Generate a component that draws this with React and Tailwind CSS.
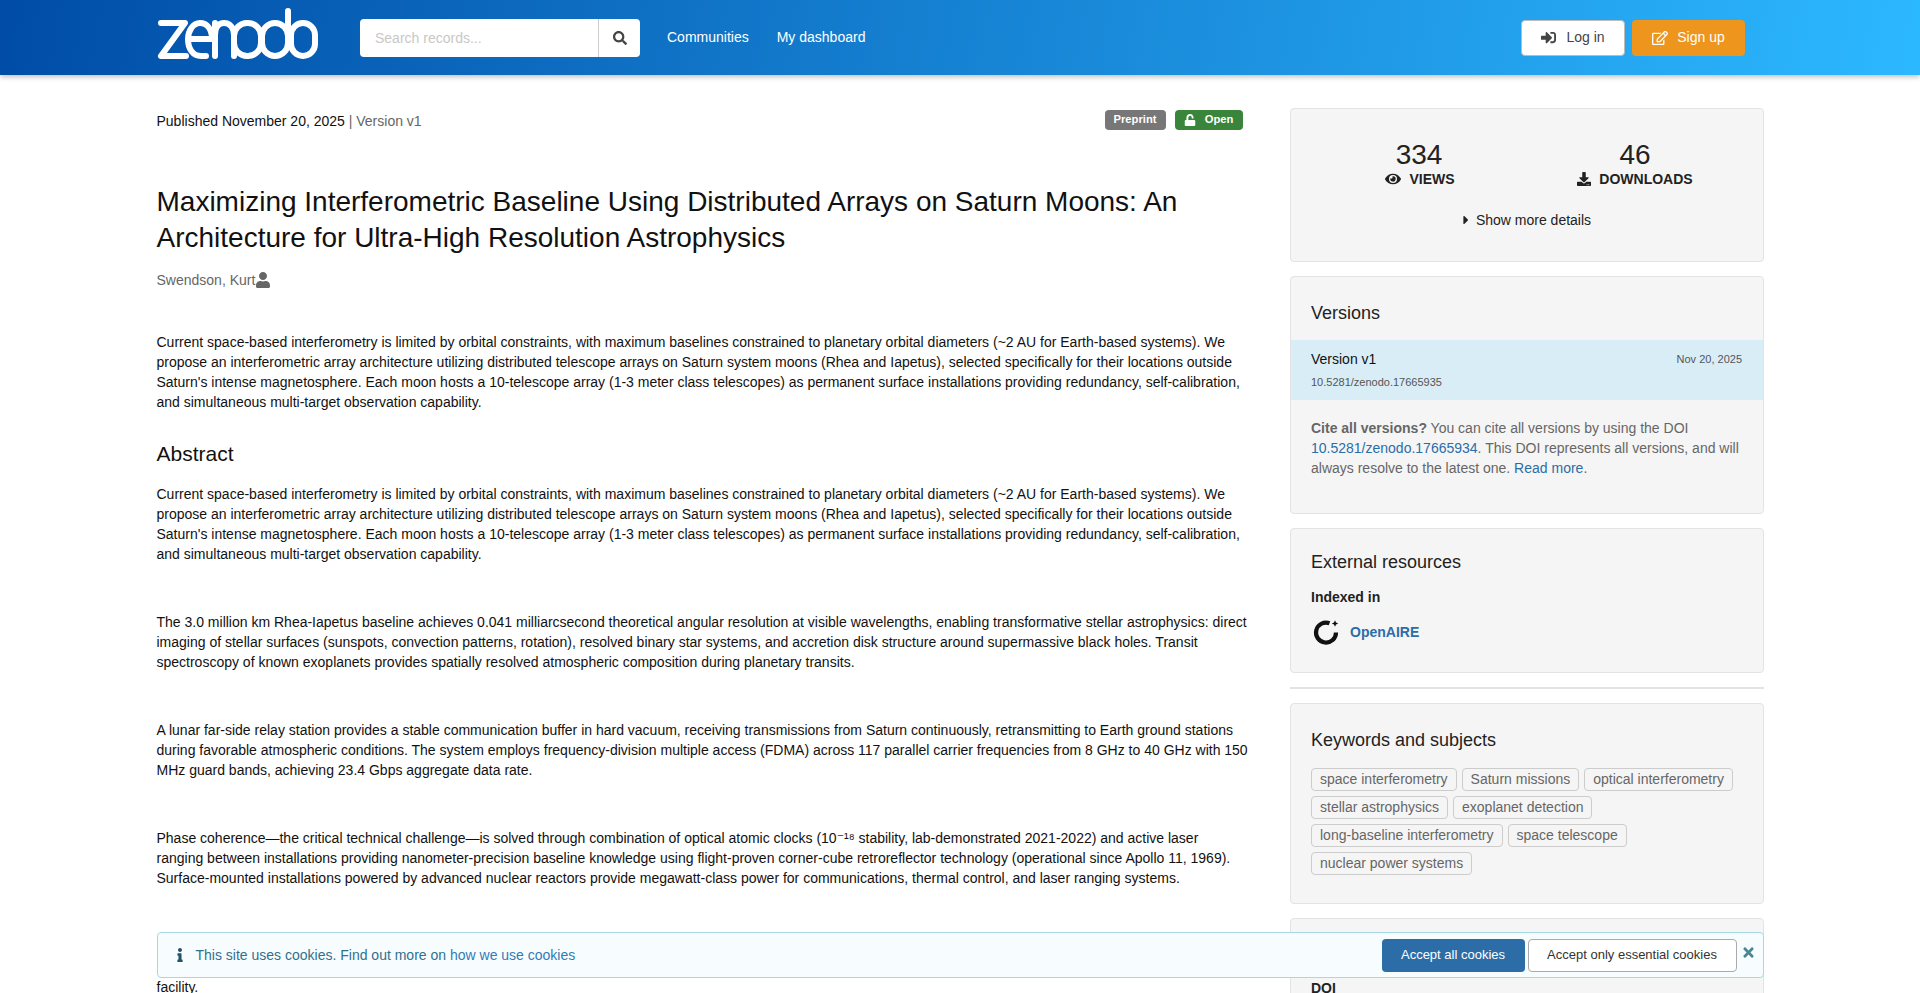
import React from 'react';
import { FaSearch, FaSignInAlt, FaRegEdit, FaEye, FaDownload, FaCaretRight, FaUser, FaUnlock, FaInfo, FaTimes } from 'react-icons/fa';

const ZenodoLogo = () => (
  <svg className="mb-[7px]" width="161" height="54" viewBox="157 7 161 54" fill="none" stroke="white" strokeWidth="6" strokeLinecap="round" strokeLinejoin="round">
    <path d="M161 23 H185 L161 56 H186" />
    <path d="M188 39 H212 C212 29 207 23 200 23 C193 23 188 31 188 39 C188 49 193 56 201 56 H206" />
    <path d="M215 56 V23 M215 35 C215 27 219 23 224 23 C230 23 234 28 234 35 V56" />
    <rect x="234" y="23" width="27" height="33" rx="13" />
    <rect x="262" y="23" width="26" height="33" rx="13" />
    <path d="M288 11 V43" />
    <rect x="291" y="23" width="24" height="33" rx="12" />
  </svg>
);

const OpenAireLogo = () => (
  <svg width="28" height="28" viewBox="0 0 28 28" fill="none">
    <path d="M18.5 5.2 A10 10 0 1 0 25 14.5" stroke="#111" strokeWidth="4.2" />
    <path d="M24 2.3 L25 4.6 L27.2 5.5 L25 6.4 L24 8.7 L23 6.4 L20.8 5.5 L23 4.6 Z" fill="#111" />
  </svg>
);

const Card = ({ className = '', children }) => (
  <div className={`bg-[#f5f5f5] border border-[#e3e3e3] rounded-[4px] ${className}`}>{children}</div>
);

const keywords = [
  'space interferometry', 'Saturn missions', 'optical interferometry', 'stellar astrophysics', 'exoplanet detection',
  'long-baseline interferometry', 'space telescope', 'nuclear power systems',
];

const abstractText = "Current space-based interferometry is limited by orbital constraints, with maximum baselines constrained to planetary orbital diameters (~2 AU for Earth-based systems). We propose an interferometric array architecture utilizing distributed telescope arrays on Saturn system moons (Rhea and Iapetus), selected specifically for their locations outside Saturn's intense magnetosphere. Each moon hosts a 10-telescope array (1-3 meter class telescopes) as permanent surface installations providing redundancy, self-calibration, and simultaneous multi-target observation capability.";

const Header = () => (
  <header className="relative z-10 h-[75px] bg-[linear-gradient(100deg,#004ca6,#2cb8ff)] shadow-[0_2px_5px_rgba(0,0,0,0.25)] flex items-center pl-[156.5px] pr-[175px]">
    <ZenodoLogo />
    <div className="flex ml-[42.5px] h-[38px] w-[280px] bg-white rounded-[4px]">
      <div className="flex-1 px-[15px] pt-[1px] flex items-center text-[14px] text-[#c8c8c8] border-r border-[#ccc]">Search records...</div>
      <div className="w-[41px] flex items-center justify-center text-[#444] text-[14px]"><FaSearch /></div>
    </div>
    <nav className="flex gap-[28px] ml-[27px] text-white text-[14px]">
      <span>Communities</span>
      <span>My dashboard</span>
    </nav>
    <div className="ml-auto flex gap-[7px] text-[14px]">
      <div className="h-[36px] w-[104px] bg-white border border-[#bbb] rounded-[4px] flex items-center justify-center gap-[10px] text-[#444]"><FaSignInAlt className="text-[15px]" /> Log in</div>
      <div className="h-[36px] w-[113px] bg-[#ed951c] rounded-[4px] flex items-center justify-center gap-[9px] text-white"><FaRegEdit className="text-[16px]" /> Sign up</div>
    </div>
  </header>
);

const MainColumn = () => (
  <main className="w-[1092px] text-[14px] leading-[20px] text-[#111]">
    <div className="flex justify-between items-center h-[20px] mt-[3px]">
      <div>Published November 20, 2025 <span className="text-[#666]">| Version v1</span></div>
      <div className="flex gap-[9px] mr-[6px] mb-[3px] text-white text-[11.2px] leading-none font-bold">
        <span className="h-[20px] w-[61px] bg-[#777] rounded-[4px] flex items-center justify-center">Preprint</span>
        <span className="h-[20px] w-[68px] bg-[#3a853c] rounded-[4px] flex items-center justify-center gap-[9px]"><FaUnlock className="text-[12px]" /> Open</span>
      </div>
    </div>
    <h1 className="mt-[53px] text-[28px] leading-[35.5px] font-normal">Maximizing Interferometric Baseline Using Distributed Arrays on Saturn Moons: An Architecture for Ultra-High Resolution Astrophysics</h1>
    <div className="mt-[15px] text-[#666] flex items-center">Swendson, Kurt<FaUser className="text-[16px]" /></div>
    <p className="mt-[42px]">{abstractText}</p>
    <h2 className="mt-[29px] text-[21px] leading-[26px] font-normal">Abstract</h2>
    <p className="mt-[17px]">{abstractText}</p>
    <p className="mt-[48px]">The 3.0 million km Rhea-Iapetus baseline achieves 0.041 milliarcsecond theoretical angular resolution at visible wavelengths, enabling transformative stellar astrophysics: direct imaging of stellar surfaces (sunspots, convection patterns, rotation), resolved binary star systems, and accretion disk structure around supermassive black holes. Transit spectroscopy of known exoplanets provides spatially resolved atmospheric composition during planetary transits.</p>
    <p className="mt-[48px]">A lunar far-side relay station provides a stable communication buffer in hard vacuum, receiving transmissions from Saturn continuously, retransmitting to Earth ground stations during favorable atmospheric conditions. The system employs frequency-division multiple access (FDMA) across 117 parallel carrier frequencies from 8 GHz to 40 GHz with 150 MHz guard bands, achieving 23.4 Gbps aggregate data rate.</p>
    <p className="mt-[48px]">Phase coherence—the critical technical challenge—is solved through combination of optical atomic clocks (10<span className="font-['DejaVu_Sans']">⁻</span>¹⁸ stability, lab-demonstrated 2021-2022) and active laser ranging between installations providing nanometer-precision baseline knowledge using flight-proven corner-cube retroreflector technology (operational since Apollo 11, 1969). Surface-mounted installations powered by advanced nuclear reactors provide megawatt-class power for communications, thermal control, and laser ranging systems.</p>
    <p className="mt-[89px]">facility.</p>
  </main>
);

const Sidebar = () => (
  <aside className="w-[474px] flex flex-col gap-[14px] text-[14px] text-[#222]">
    <Card className="h-[154px] pt-[31px] px-[20px]">
      <div className="grid grid-cols-2 text-center">
        <div>
          <div className="text-[28px] leading-[30px]">334</div>
          <div className="flex items-center justify-center gap-[8px] font-bold leading-[18px] ml-[2px]"><FaEye className="text-[16px]" /> VIEWS</div>
        </div>
        <div>
          <div className="text-[28px] leading-[30px]">46</div>
          <div className="flex items-center justify-center gap-[8px] font-bold leading-[18px]"><FaDownload /> DOWNLOADS</div>
        </div>
      </div>
      <div className="mt-[22px] pr-[4px] flex items-center justify-center gap-[3px] leading-[20px]"><FaCaretRight className="text-[14px]" /> Show more details</div>
    </Card>
    <Card className="h-[238px] pt-[24px]">
      <h3 className="px-[20px] text-[18px] leading-[24px] font-normal">Versions</h3>
      <div className="mt-[15px] h-[60px] bg-[#d9edf7] pl-[20px] pr-[21px] pt-[9px]">
        <div className="flex justify-between items-center leading-[20px] text-[#111]">
          <span>Version v1</span>
          <span className="text-[11px] text-[#555]">Nov 20, 2025</span>
        </div>
        <div className="mt-[5px] text-[11px] leading-[16px] text-[#555]">10.5281/zenodo.17665935</div>
      </div>
      <p className="mt-[18px] px-[20px] leading-[20px] text-[#666]"><b>Cite all versions?</b> You can cite all versions by using the DOI <span className="text-[#2c6da8]">10.5281/zenodo.17665934</span>. This DOI represents all versions, and will always resolve to the latest one. <span className="text-[#2c6da8]">Read more</span>.</p>
    </Card>
    <Card className="h-[145px] pt-[21px] px-[20px]">
      <h3 className="text-[18px] leading-[24px] font-normal">External resources</h3>
      <div className="mt-[14px] font-bold leading-[18px]">Indexed in</div>
      <div className="mt-[12px] flex items-center gap-[11px] font-bold text-[#2c6da8]"><OpenAireLogo /> OpenAIRE</div>
    </Card>
    <hr className="border-t-2 border-[#e3e3e3]" />
    <Card className="h-[201px] pt-[24px] px-[20px]">
      <h3 className="text-[18px] leading-[24px] font-normal">Keywords and subjects</h3>
      <div className="mt-[16px] flex flex-wrap gap-x-[5px] gap-y-[5px] w-[440px]">
        {keywords.map(k => (
          <span key={k} className="h-[23px] px-[8px] flex items-center border border-[#ccc] rounded-[4px] text-[#666]">{k}</span>
        ))}
      </div>
    </Card>
    <Card className="h-[120px] pt-[59px] px-[20px]">
      <div className="font-bold">DOI</div>
    </Card>
  </aside>
);

const CookieBanner = () => (
  <div className="fixed left-[156.5px] top-[932px] w-[1607px] h-[46px] z-20 bg-[#f7fdfe] border border-[#a5d9e3] rounded-[4px] flex items-center pl-[15px] pr-[6.5px] text-[14px] text-[#31708f]">
    <FaInfo className="text-[#245269] text-[14px]" />
    <span className="ml-[9px]">This site uses cookies. Find out more on <span className="text-[#337ab7]">how we use cookies</span></span>
    <div className="ml-auto flex items-center gap-[3px]">
      <div className="h-[33px] w-[143px] bg-[#2c6da8] text-white rounded-[4px] flex items-center justify-center text-[13px]">Accept all cookies</div>
      <div className="h-[33px] w-[209px] bg-white border border-[#aaa] text-[#333] rounded-[4px] flex items-center justify-center text-[13px]">Accept only essential cookies</div>
      <FaTimes className="ml-[1.5px] mb-[6px] text-[#4a8796] text-[15px]" />
    </div>
  </div>
);

const App = () => (
  <div className="h-[993px] overflow-hidden bg-white font-['Liberation_Sans',Arial,sans-serif]">
    <Header />
    <div className="flex justify-between pl-[156.5px] pr-[156px] pt-[33px]">
      <MainColumn />
      <Sidebar />
    </div>
    <CookieBanner />
  </div>
);

export default App;
